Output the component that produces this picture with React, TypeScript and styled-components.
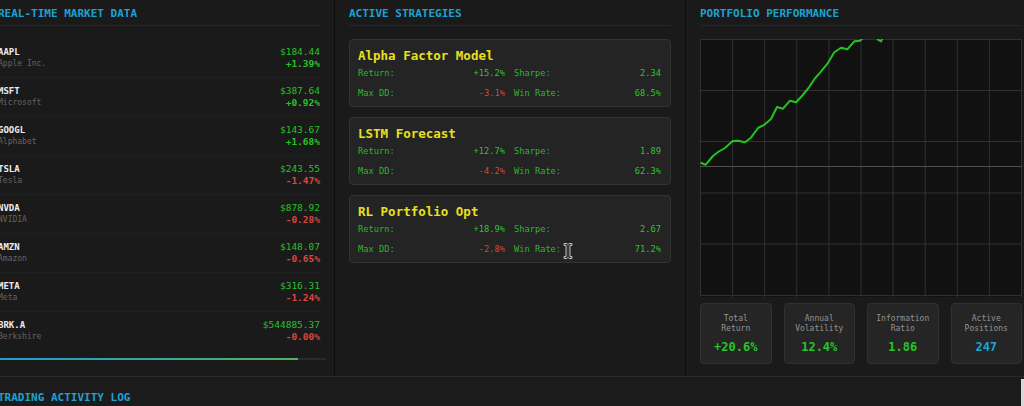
import React from "react";
import styled, { createGlobalStyle } from "styled-components";

const GlobalStyle = createGlobalStyle`
  html, body {
    margin: 0;
    padding: 0;
    background: #0d0d0d;
    overflow: hidden;
  }
  body {
    font-family: "DejaVu Sans Mono", "Liberation Mono", monospace;
  }
`;

type Quote = {
  ticker: string;
  name: string;
  price: string;
  change: string;
};

type Strategy = {
  name: string;
  ret: string;
  sharpe: string;
  maxDD: string;
  winRate: string;
};

type Metric = {
  label: string[];
  value: string;
  accent?: boolean;
};

const quotes: Quote[] = [
  { ticker: "AAPL", name: "Apple Inc.", price: "$184.44", change: "+1.39%" },
  { ticker: "MSFT", name: "Microsoft", price: "$387.64", change: "+0.92%" },
  { ticker: "GOOGL", name: "Alphabet", price: "$143.67", change: "+1.68%" },
  { ticker: "TSLA", name: "Tesla", price: "$243.55", change: "-1.47%" },
  { ticker: "NVDA", name: "NVIDIA", price: "$878.92", change: "-0.28%" },
  { ticker: "AMZN", name: "Amazon", price: "$148.07", change: "-0.65%" },
  { ticker: "META", name: "Meta", price: "$316.31", change: "-1.24%" },
  { ticker: "BRK.A", name: "Berkshire", price: "$544885.37", change: "-0.00%" },
];

const strategies: Strategy[] = [
  { name: "Alpha Factor Model", ret: "+15.2%", sharpe: "2.34", maxDD: "-3.1%", winRate: "68.5%" },
  { name: "LSTM Forecast", ret: "+12.7%", sharpe: "1.89", maxDD: "-4.2%", winRate: "62.3%" },
  { name: "RL Portfolio Opt", ret: "+18.9%", sharpe: "2.67", maxDD: "-2.8%", winRate: "71.2%" },
];

const metrics: Metric[] = [
  { label: ["Total", "Return"], value: "+20.6%" },
  { label: ["Annual", "Volatility"], value: "12.4%" },
  { label: ["Information", "Ratio"], value: "1.86" },
  { label: ["Active", "Positions"], value: "247", accent: true },
];

// equity curve, in chart pixels (322 x 258)
const curve: [number, number][] = [
  [0.7, 123.7], [5.7, 125.7], [13, 117], [18, 113], [25, 109], [32.7, 102],
  [38, 101.7], [45, 103.3], [51, 98.7], [58, 89], [64, 86], [71, 80],
  [77, 68], [83, 69.7], [90, 61.7], [96, 63.3], [102, 57], [109, 48.3],
  [115, 39.3], [121.7, 31.7], [127.7, 24.3], [134.3, 13.3], [141, 8.7],
  [147.3, 10.3], [154.3, 2.3], [160, 1.7], [163, -1], [170, -8], [176, -3],
  [178, 0.6], [181, 2.4], [184, -4], [192, -12], [210, -20], [322, -60],
];

const Page = styled.div`
  position: relative;
  width: 1024px;
  height: 406px;
  overflow: hidden;
`;

const Dashboard = styled.div`
  margin-left: -16px;
  width: 1052px;
  display: flex;
  flex-direction: column;
`;

const TopRow = styled.div`
  display: grid;
  grid-template-columns: 350px 350px 350px;
  column-gap: 1px;
  height: 376px;
`;

const Panel = styled.section`
  background: #1a1a1a;
  padding: 8px 14px 0;
  display: flex;
  flex-direction: column;
  min-height: 0;
`;

const PanelTitle = styled.h2<{ $plain?: boolean }>`
  margin: 0;
  padding-bottom: 5px;
  border-bottom: ${(p) => (p.$plain ? "none" : "1px solid #262626")};
  color: #1ca2d2;
  font-size: 11px;
  line-height: 12px;
  font-weight: bold;
  text-transform: uppercase;
`;

const QuoteList = styled.div`
  margin-top: 13px;
  display: flex;
  flex-direction: column;
`;

const QuoteRow = styled.div`
  height: 39px;
  padding-top: 7px;
  box-sizing: border-box;
  display: flex;
  justify-content: space-between;
  border-bottom: 1px solid #202020;

  &:last-child {
    border-bottom: none;
  }
`;

const QuoteSide = styled.div<{ $right?: boolean }>`
  display: flex;
  flex-direction: column;
  align-items: ${(p) => (p.$right ? "flex-end" : "flex-start")};
`;

const Ticker = styled.span`
  color: #ececec;
  font-size: 9px;
  line-height: 12px;
  font-weight: bold;
`;

const CompanyName = styled.span`
  color: #646464;
  font-size: 8px;
  line-height: 12px;
`;

const Price = styled.span`
  color: #27c027;
  font-size: 9.5px;
  line-height: 12px;
`;

const Change = styled.span<{ $down: boolean }>`
  color: ${(p) => (p.$down ? "#dc463c" : "#27c427")};
  font-size: 9.5px;
  line-height: 12px;
  font-weight: bold;
`;

const ProgressTrack = styled.div`
  margin-top: 7px;
  width: calc(100% + 6px);
  height: 2px;
  background: #2a2a2a;
`;

const ProgressFill = styled.div`
  height: 100%;
  background: linear-gradient(90deg, #1aa0d2, #55b060);
`;

const StrategyList = styled.div`
  margin-top: 13px;
  display: flex;
  flex-direction: column;
  gap: 10px;
`;

const StrategyCard = styled.div`
  background: #242424;
  border: 1px solid #333333;
  border-radius: 4px;
  padding: 9px 9px 7px 8px;
`;

const StrategyName = styled.h3`
  margin: 0;
  color: #e8e01e;
  font-size: 12.5px;
  line-height: 14px;
  font-weight: bold;
`;

const StatGrid = styled.div`
  margin-top: 4px;
  display: grid;
  grid-template-columns: 1fr 1fr;
  column-gap: 9px;
  row-gap: 8px;
`;

const StatPair = styled.div`
  display: flex;
  justify-content: space-between;
  font-size: 8.7px;
  line-height: 12px;
`;

const StatLabel = styled.span`
  color: #2db42d;
`;

const StatValue = styled.span<{ $down?: boolean }>`
  color: ${(p) => (p.$down ? "#d8463d" : "#30c330")};
`;

const ChartBox = styled.div`
  margin-top: 13px;
  height: 258px;
  background: #111111;
  overflow: hidden;
`;

const MetricGrid = styled.div`
  margin-top: 6px;
  display: grid;
  grid-template-columns: repeat(4, 1fr);
  column-gap: 12px;
`;

const MetricCard = styled.div`
  height: 61px;
  box-sizing: border-box;
  padding-top: 10px;
  background: #252525;
  border: 1px solid #313131;
  border-radius: 4px;
  display: flex;
  flex-direction: column;
  align-items: center;
`;

const MetricLabel = styled.span`
  color: #939393;
  font-size: 8px;
  line-height: 10px;
`;

const MetricValue = styled.span<{ $accent?: boolean }>`
  margin-top: 6px;
  color: ${(p) => (p.$accent ? "#1ca2d2" : "#27c427")};
  font-size: 12px;
  line-height: 14px;
  font-weight: bold;
`;

const LogPanel = styled.section`
  background: #1b1b1b;
  border-top: 1px solid #2a2a2a;
  padding: 15px 14px 0;
  height: 60px;
`;

const Cursor = styled.svg`
  position: absolute;
  left: 562px;
  top: 242px;
`;

const ScrollThumb = styled.div`
  position: absolute;
  right: 0;
  top: 379px;
  width: 3px;
  height: 27px;
  background: #d8d8d8;
`;

const PerformanceChart = () => {
  const cols = Array.from({ length: 11 }, (_, i) => 0.5 + i * 32.1);
  const rows = [0.5, 51.5, 102.5, 154, 205, 256.5];
  const d = curve.map(([x, y], i) => `${i ? "L" : "M"}${x} ${y}`).join(" ");
  return (
    <svg width="322" height="258" viewBox="0 0 322 258">
      {cols.map((x) => (
        <line key={`v${x}`} x1={x} y1={0} x2={x} y2={258} stroke="#313131" strokeWidth="1" />
      ))}
      {rows.map((y) => (
        <line key={`h${y}`} x1={0} y1={y} x2={322} y2={y} stroke="#313131" strokeWidth="1" />
      ))}
      <line x1={0} y1={127.5} x2={322} y2={127.5} stroke="#505050" strokeWidth="1" />
      <path d={d} fill="none" stroke="#22c422" strokeWidth="2" strokeLinejoin="round" />
    </svg>
  );
};

export default function App() {
  return (
    <Page>
      <GlobalStyle />
      <Dashboard>
        <TopRow>
          <Panel>
            <PanelTitle>Real-Time Market Data</PanelTitle>
            <QuoteList>
              {quotes.map((q) => (
                <QuoteRow key={q.ticker}>
                  <QuoteSide>
                    <Ticker>{q.ticker}</Ticker>
                    <CompanyName>{q.name}</CompanyName>
                  </QuoteSide>
                  <QuoteSide $right>
                    <Price>{q.price}</Price>
                    <Change $down={q.change.startsWith("-")}>{q.change}</Change>
                  </QuoteSide>
                </QuoteRow>
              ))}
            </QuoteList>
            <ProgressTrack>
              <ProgressFill style={{ width: "91.5%" }} />
            </ProgressTrack>
          </Panel>

          <Panel>
            <PanelTitle>Active Strategies</PanelTitle>
            <StrategyList>
              {strategies.map((s) => (
                <StrategyCard key={s.name}>
                  <StrategyName>{s.name}</StrategyName>
                  <StatGrid>
                    <StatPair>
                      <StatLabel>Return:</StatLabel>
                      <StatValue>{s.ret}</StatValue>
                    </StatPair>
                    <StatPair>
                      <StatLabel>Sharpe:</StatLabel>
                      <StatValue>{s.sharpe}</StatValue>
                    </StatPair>
                    <StatPair>
                      <StatLabel>Max DD:</StatLabel>
                      <StatValue $down>{s.maxDD}</StatValue>
                    </StatPair>
                    <StatPair>
                      <StatLabel>Win Rate:</StatLabel>
                      <StatValue>{s.winRate}</StatValue>
                    </StatPair>
                  </StatGrid>
                </StrategyCard>
              ))}
            </StrategyList>
          </Panel>

          <Panel>
            <PanelTitle>Portfolio Performance</PanelTitle>
            <ChartBox>
              <PerformanceChart />
            </ChartBox>
            <MetricGrid>
              {metrics.map((m) => (
                <MetricCard key={m.value}>
                  {m.label.map((l) => (
                    <MetricLabel key={l}>{l}</MetricLabel>
                  ))}
                  <MetricValue $accent={m.accent}>{m.value}</MetricValue>
                </MetricCard>
              ))}
            </MetricGrid>
          </Panel>
        </TopRow>

        <LogPanel>
          <PanelTitle $plain>Trading Activity Log</PanelTitle>
        </LogPanel>
      </Dashboard>

      <Cursor width="12" height="18" viewBox="0 0 12 18">
        <path
          d="M2 1.5h3l1 1 1-1h3v2H8v11h2v2H7l-1-1-1 1H2v-2h2v-11H2z"
          fill="#3a3a3a"
          stroke="#bdbdbd"
          strokeWidth="1"
          strokeLinejoin="round"
        />
      </Cursor>
      <ScrollThumb />
    </Page>
  );
}
